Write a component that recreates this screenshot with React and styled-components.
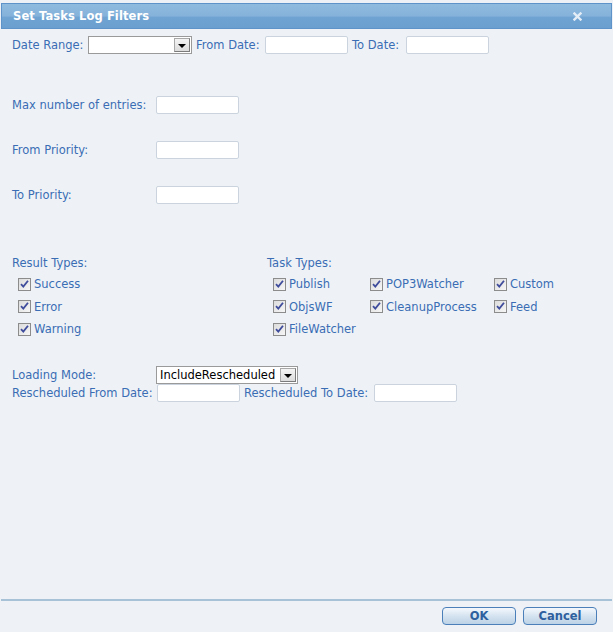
import React from "react";
import styled, { createGlobalStyle } from "styled-components";

const Global = createGlobalStyle`
  html, body { margin: 0; padding: 0; background: #eef2f7; }
  body { font-family: "DejaVu Sans", Verdana, sans-serif; font-size: 11.5px; }
  * { box-sizing: border-box; }
`;

const Dialog = styled.div`
  width: 613px;
  height: 632px;
  display: flex;
  flex-direction: column;
  background: #eef2f7;
  padding-top: 3px;
`;

const TitleBar = styled.div`
  height: 26px;
  margin: 0 1px;
  border: 1px solid #5d93c8;
  background: linear-gradient(#90bbdf 0%, #85b2da 50%, #6fa3d2 55%, #6a9fcf 100%);
  display: flex;
  align-items: center;
  justify-content: space-between;
  padding: 0 29px 0 11px;
`;

const Title = styled.div`
  color: #fff;
  font-weight: bold;
  font-size: 11.5px;
  letter-spacing: 0.1px;
`;

const Body = styled.div`
  flex: 1;
  padding: 7px 12px 0 12px;
  display: flex;
  flex-direction: column;
`;

const Label = styled.span`
  color: #3a6db4;
  white-space: nowrap;
  width: ${(p) => (p.$w ? p.$w + "px" : "auto")};
  flex: none;
`;

const Row = styled.div`
  display: flex;
  align-items: center;
  gap: ${(p) => p.$gap ?? 4}px;
  margin-top: ${(p) => p.$mt ?? 0}px;
  height: 18px;
`;

const TextBox = styled.input`
  width: 83px;
  height: 18px;
  border: 1px solid #cbd4de;
  border-radius: 2px;
  background: #fff;
  padding: 0 2px;
  font: inherit;
`;

const SelectBox = styled.div`
  width: ${(p) => p.$w}px;
  height: 18px;
  border: 1px solid #9a9a9a;
  background: #fff;
  display: flex;
  align-items: stretch;
`;

const SelectText = styled.div`
  flex: 1;
  color: #000;
  line-height: 16px;
  padding-left: 3px;
  white-space: nowrap;
  overflow: hidden;
  font-family: "DejaVu Sans", sans-serif;
  font-size: 11.5px;
`;

const DropBtn = styled.div`
  width: 16px;
  margin: 1px;
  background: linear-gradient(#f4f4f4, #dcdcdc);
  border: 1px solid #7b7b7b;
  border-top-color: #a8a8a8;
  border-left-color: #a8a8a8;
  display: flex;
  align-items: center;
  justify-content: center;
  &::after {
    content: "";
    margin-top: 2px;
    border-left: 4px solid transparent;
    border-right: 4px solid transparent;
    border-top: 4px solid #000;
  }
`;

const Types = styled.div`
  display: flex;
  margin-top: 52px;
`;

const Group = styled.div`
  width: ${(p) => p.$w}px;
  display: flex;
  flex-direction: column;
`;

const GroupTitle = styled.div`
  color: #3a6db4;
  height: 14px;
  line-height: 14px;
`;

const Grid = styled.div`
  display: grid;
  grid-template-columns: ${(p) => p.$cols};
  grid-auto-rows: 22.5px;
  padding-left: 6px;
  margin-top: 7px;
`;

const CheckItem = styled.label`
  display: flex;
  align-items: center;
  gap: 3px;
  color: #3a6db4;
  height: 14px;
  white-space: nowrap;
`;

const Box = styled.span`
  width: 13px;
  height: 13px;
  flex: none;
  border: 1px solid #8c8c8c;
  background: linear-gradient(135deg, #dcdcdc, #f6f6f6);
  display: flex;
  align-items: center;
  justify-content: center;
`;

const Check = () => (
  <Box>
    <svg width="9" height="9" viewBox="0 0 9 9">
      <path d="M1 4.2 L3.3 6.6 L8 0.8" fill="none" stroke="#3f4c9c" strokeWidth="1.8" />
    </svg>
  </Box>
);

const Footer = styled.div`
  border-top: 2px solid #a7c1d6;
  margin: 0 1px;
  height: 33px;
  display: flex;
  justify-content: flex-end;
  align-items: flex-start;
  gap: 7px;
  padding: 6px 15px 0 0;
`;

const Button = styled.button`
  width: 74px;
  height: 18px;
  border: 1px solid #4a7fb9;
  border-radius: 4px;
  background: linear-gradient(#f4f8fc 0%, #d5e3f0 50%, #bcd2e6 100%);
  color: #2e5f9e;
  font-family: "DejaVu Sans", Verdana, sans-serif;
  font-weight: bold;
  font-size: 11.5px;
  padding: 0;
  line-height: 16px;
`;

const CloseIcon = () => (
  <svg width="9" height="9" viewBox="0 0 9 9">
    <path d="M1.5 1.5 L7.5 7.5 M7.5 1.5 L1.5 7.5" stroke="#e4edf6" strokeWidth="2.4" strokeLinecap="square" />
  </svg>
);

export default function App() {
  return (
    <>
      <Global />
      <Dialog>
        <TitleBar>
          <Title>Set Tasks Log Filters</Title>
          <CloseIcon />
        </TitleBar>
        <Body>
          <Row>
            <Label $w={72}>Date Range:</Label>
            <SelectBox $w={104}>
              <SelectText></SelectText>
              <DropBtn />
            </SelectBox>
            <Label $w={65}>From Date:</Label>
            <TextBox />
            <Label $w={50}>To Date:</Label>
            <TextBox />
          </Row>

          <Row $mt={42} $gap={0}>
            <Label $w={144}>Max number of entries:</Label>
            <TextBox />
          </Row>
          <Row $mt={27} $gap={0}>
            <Label $w={144}>From Priority:</Label>
            <TextBox />
          </Row>
          <Row $mt={27} $gap={0}>
            <Label $w={144}>To Priority:</Label>
            <TextBox />
          </Row>

          <Types>
            <Group $w={255}>
              <GroupTitle>Result Types:</GroupTitle>
              <Grid $cols="1fr">
                <CheckItem><Check />Success</CheckItem>
                <CheckItem><Check />Error</CheckItem>
                <CheckItem><Check />Warning</CheckItem>
              </Grid>
            </Group>
            <Group $w={320}>
              <GroupTitle>Task Types:</GroupTitle>
              <Grid $cols="97px 124px 1fr">
                <CheckItem><Check />Publish</CheckItem>
                <CheckItem><Check />POP3Watcher</CheckItem>
                <CheckItem><Check />Custom</CheckItem>
                <CheckItem><Check />ObjsWF</CheckItem>
                <CheckItem><Check />CleanupProcess</CheckItem>
                <CheckItem><Check />Feed</CheckItem>
                <CheckItem><Check />FileWatcher</CheckItem>
              </Grid>
            </Group>
          </Types>

          <Row $mt={21} $gap={0}>
            <Label $w={144}>Loading Mode:</Label>
            <SelectBox $w={142}>
              <SelectText>IncludeRescheduled</SelectText>
              <DropBtn />
            </SelectBox>
          </Row>
          <Row>
            <Label $w={141}>Rescheduled From Date:</Label>
            <TextBox />
            <Label $w={126}>Rescheduled To Date:</Label>
            <TextBox />
          </Row>
        </Body>
        <Footer>
          <Button>OK</Button>
          <Button>Cancel</Button>
        </Footer>
      </Dialog>
    </>
  );
}
